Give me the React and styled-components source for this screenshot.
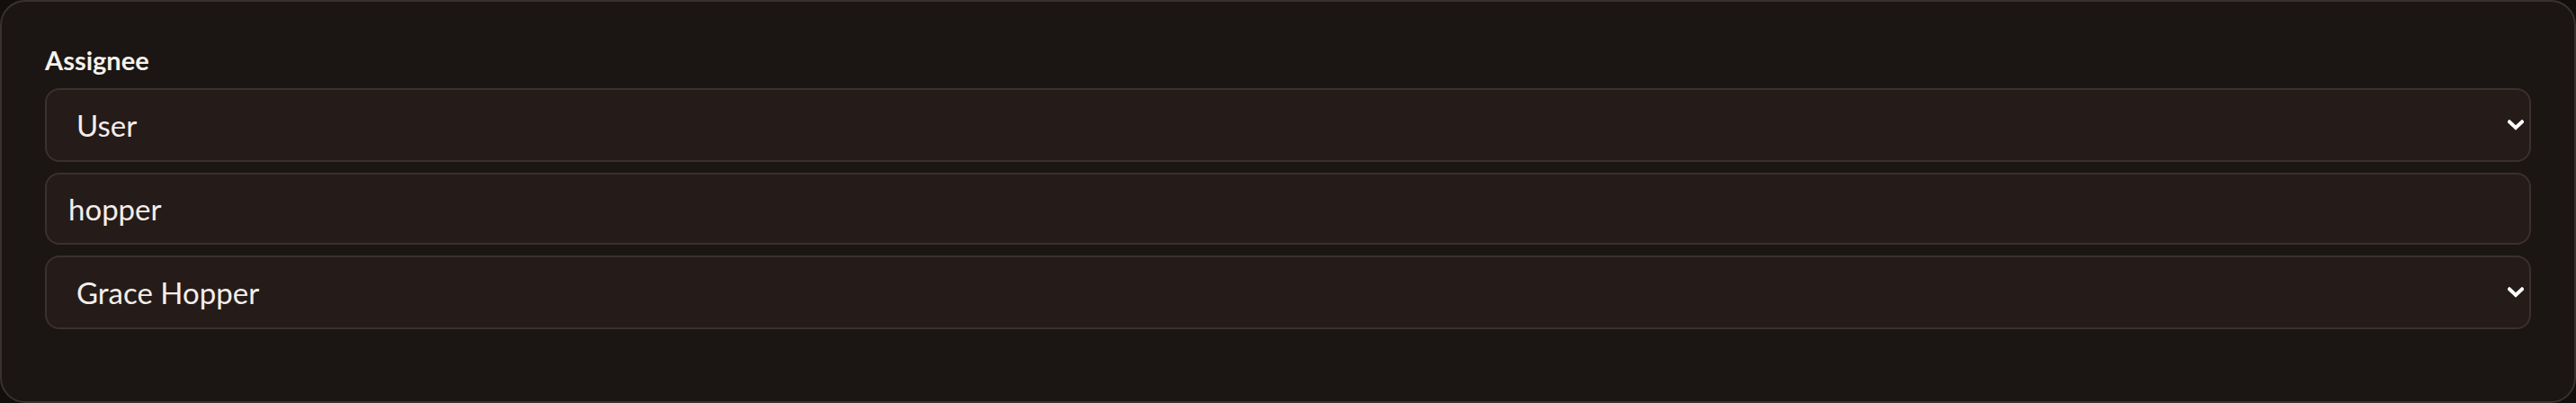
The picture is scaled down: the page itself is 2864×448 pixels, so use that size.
import React, { useState } from "react";
import styled, { createGlobalStyle } from "styled-components";

const GlobalStyle = createGlobalStyle`
  html, body {
    margin: 0;
    padding: 0;
    background: #110e0d;
  }
  body {
    font-family: "Lato", "Noto Sans", sans-serif;
    color: #f4eee9;
  }
`;

const Card = styled.section`
  box-sizing: border-box;
  width: 2864px;
  border: 2px solid #3a312e;
  border-radius: 28px;
  background: #1b1613;
  padding: 48px 48px 48px;
`;

const Field = styled.div`
  display: flex;
  flex-direction: column;
  gap: 12px;
  margin-bottom: 32px;
`;

const Label = styled.label`
  font-size: 29px;
  font-weight: 700;
  line-height: 34px;
  margin-bottom: 2px;
  color: #f6f1ec;
`;

const SelectWrap = styled.div`
  position: relative;
  display: flex;
`;

const Select = styled.select`
  appearance: none;
  flex: 1;
  box-sizing: border-box;
  height: 82px;
  border: 2px solid #3a312e;
  border-radius: 16px;
  background: #251c1a;
  color: #f4eee9;
  font-family: inherit;
  font-size: 33px;
  padding: 0 60px 0 33px;
  outline: none;
`;

const Chevron = styled.svg`
  position: absolute;
  right: 8px;
  top: 50%;
  width: 18px;
  height: 12px;
  transform: translateY(-50%);
  pointer-events: none;
`;

const Input = styled.input`
  box-sizing: border-box;
  height: 80px;
  border: 2px solid #3a312e;
  border-radius: 16px;
  background: #251c1a;
  color: #f4eee9;
  font-family: inherit;
  font-size: 33px;
  padding: 0 24px;
  outline: none;
`;

const Dropdown = ({ value, onChange, options }) => (
  <SelectWrap>
    <Select value={value} onChange={(e) => onChange(e.target.value)}>
      {options.map((o) => (
        <option key={o}>{o}</option>
      ))}
    </Select>
    <Chevron viewBox="0 0 18 12">
      <path
        d="M2 2.5 L9 9 L16 2.5"
        fill="none"
        stroke="#ffffff"
        strokeWidth="4"
        strokeLinecap="square"
      />
    </Chevron>
  </SelectWrap>
);

export default function App() {
  const [kind, setKind] = useState("User");
  const [query, setQuery] = useState("hopper");
  const [person, setPerson] = useState("Grace Hopper");

  return (
    <>
      <GlobalStyle />
      <Card>
        <Field>
          <Label>Assignee</Label>
          <Dropdown value={kind} onChange={setKind} options={["User", "Team"]} />
          <Input value={query} onChange={(e) => setQuery(e.target.value)} />
          <Dropdown
            value={person}
            onChange={setPerson}
            options={["Grace Hopper", "Ada Lovelace"]}
          />
        </Field>
      </Card>
    </>
  );
}
